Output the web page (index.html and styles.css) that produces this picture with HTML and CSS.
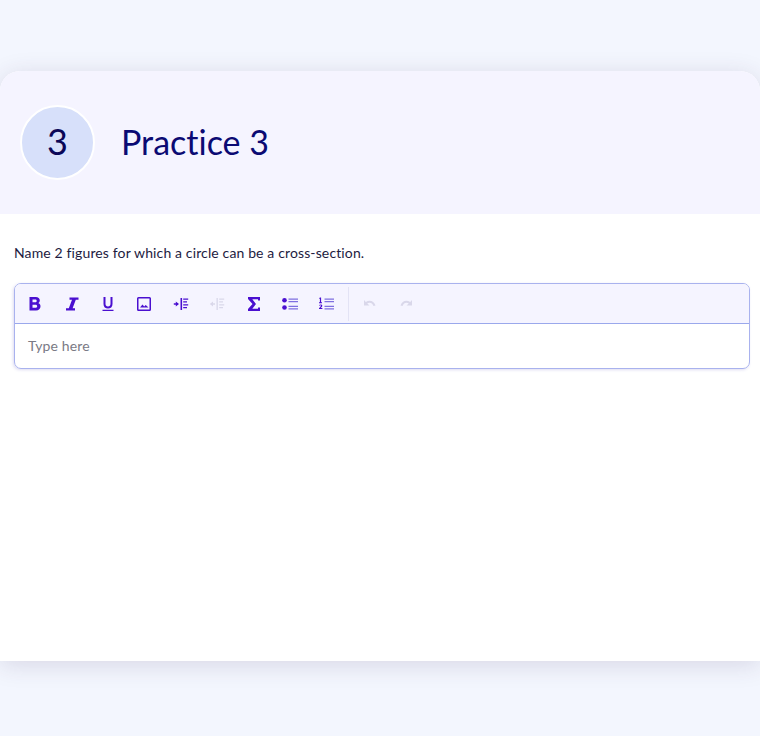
FILE: index.html
```html
<!DOCTYPE html>
<html lang="en">
<head>
    <meta charset="UTF-8">
    <meta name="viewport" content="width=device-width, initial-scale=1.0">
    <title>Practice 3</title>
    <link rel="stylesheet" href="styles.css">
</head>
<body>
    <div class="card">
        <div class="card-header">
            <div class="number">3</div>
            <h1 class="title">Practice 3</h1>
        </div>
        <div class="card-body">
            <p class="question">Name 2 figures for which a circle can be a cross-section.</p>
            <div class="editor">
                <div class="toolbar">
                    <div class="tool">
                        <svg viewBox="0 0 16 16"><path d="M2.500 1h6.300c2.500 0 4 1.300 4 3.400 0 1.200-.6 2.200-1.600 2.700 1.400.5 2.300 1.600 2.300 3.100 0 2.400-1.700 4.300-4.500 4.300H2.500V1zm3 2.500v2.800h2.700c.9 0 1.500-.5 1.500-1.400s-.6-1.400-1.500-1.400H5.500zm0 5.200v3h3c1.100 0 1.700-.6 1.700-1.500s-.6-1.500-1.700-1.500h-3z" fill-rule="evenodd"/></svg>
                    </div>
                    <div class="tool">
                        <svg viewBox="0 0 16 16"><path d="M5.500 1.500h9v2.200h-2.700L8.600 12.300h2.400v2.200H2v-2.200h2.800L8 3.700H5.500z"/></svg>
                    </div>
                    <div class="tool">
                        <svg viewBox="0 0 16 16"><path d="M3.500 1h2v6.800c0 1.700 1 2.700 2.500 2.700s2.500-1 2.500-2.700V1h2v7c0 3-1.900 4.500-4.500 4.500S3.500 11 3.500 8zM2.500 13.800h11V15h-11z"/></svg>
                    </div>
                    <div class="tool">
                        <svg viewBox="0 0 16 16"><path d="M2.500 1h11A1.500 1.500 0 0 1 15 2.500v11a1.500 1.500 0 0 1-1.500 1.500h-11A1.500 1.500 0 0 1 1 13.500v-11A1.500 1.500 0 0 1 2.500 1zm0 1.600v10.800h11V2.600zm1.500 9l2.500-3.200 1.700 2 1.500-1.500 2.800 2.700z" fill-rule="evenodd"/></svg>
                    </div>
                    <div class="tool">
                        <svg viewBox="0 0 16 16"><path d="M7.500 2h1.600v12H7.500zM10.200 2.500h5v1.300h-5zM10.200 5.300h3.800v1.300h-3.800zM10.200 8.200h5v1.300h-5zM10.200 11h3.800v1.300h-3.800zM0.800 7.300h2V5.600L6 8l-3.200 2.400V8.700h-2z"/></svg>
                    </div>
                    <div class="tool disabled">
                        <svg viewBox="0 0 16 16"><path d="M7.500 2h1.300v12H7.500zM10.200 2.500h5v1.300h-5zM10.200 5.300h3.800v1.300h-3.800zM10.200 8.200h5v1.300h-5zM10.200 11h3.800v1.300h-3.800zM6 7.300H4V5.600L.8 8 4 10.400V8.700h2z"/></svg>
                    </div>
                    <div class="tool">
                        <svg viewBox="0 0 16 16"><path d="M2 1h12v3.600h-2V3.300H6.300L10 8l-3.700 4.700H12v-1.300h2V15H2v-2l4.500-5L2 3z"/></svg>
                    </div>
                    <div class="tool">
                        <svg viewBox="0 0 16 16"><circle cx="2.500" cy="4.300" r="2.300"/><circle cx="2.500" cy="11.500" r="2.300"/><path class="light" d="M6.500 2.500H16v1.300H6.500zM6.500 5H16v1.300H6.500zM6.500 9.700H16V11H6.500zM6.500 12.200H16v1.300H6.500z"/></svg>
                    </div>
                    <div class="tool">
                        <svg viewBox="0 0 16 16"><path d="M1.800 1.500h1.300v4.700H4v1H1v-1h.9V2.700l-.9.300zM1 9.300c.4-.6 1-.9 1.700-.9 1 0 1.600.6 1.600 1.400 0 .7-.5 1.200-1.600 2.300h1.700v1H1v-.9c1.500-1.500 2-2 2-2.400 0-.3-.2-.5-.5-.5s-.6.2-.8.5z"/><path class="light" d="M6.500 2.500H16v1.300H6.500zM6.500 5H16v1.300H6.500zM6.500 9.700H16V11H6.500zM6.500 12.200H16v1.300H6.500z"/></svg>
                    </div>
                    <div class="divider"></div>
                    <div class="tool disabled">
                        <svg viewBox="0 0 16 16"><path d="M2 4v5.500h5.500L5.200 7.400c2.400-1.600 5.300-.6 6.300 2.600l2-.6C12.100 5 7.600 3.500 3.800 6z"/></svg>
                    </div>
                    <div class="tool disabled">
                        <svg viewBox="0 0 16 16"><path d="M14 4v5.500H8.500l2.300-2.100C8.400 5.800 5.500 6.800 4.500 10l-2-.6C3.900 5 8.400 3.500 12.200 6z"/></svg>
                    </div>
                </div>
                <div class="input">Type here</div>
            </div>
        </div>
    </div>
</body>
</html>
```

FILE: styles.css
```css
body {
    margin: 0;
    padding: 71px 0 75px;
    background-color: #f3f6fe;
    font-family: Lato, "Noto Sans", Arial, sans-serif;
    font-variant-ligatures: none;
}

.card {
    height: 590px;
    background-color: #fff;
    border-radius: 20px 20px 0 0;
    box-shadow: 0 4px 24px rgba(60, 40, 90, 0.15);
    overflow: hidden;
}

.card-header {
    height: 143px;
    box-sizing: border-box;
    padding: 0 0 1px 20px;
    background-color: #f5f4ff;
    display: flex;
    align-items: center;
    gap: 26px;
}

.number {
    width: 75px;
    height: 75px;
    box-sizing: border-box;
    padding-bottom: 2px;
    border: 2px solid #fff;
    border-radius: 50%;
    background-color: #d7e0fa;
    color: #0b0757;
    font-size: 36px;
    display: flex;
    align-items: center;
    justify-content: center;
}

.title {
    margin: 0 0 2px;
    color: #0b0a73;
    font-size: 34px;
    font-weight: 400;
}

.card-body {
    padding: 29px 10px 0 14px;
}

.question {
    margin: 0 0 20px;
    color: #1d1b3f;
    font-size: 14px;
    line-height: 20px;
    letter-spacing: 0.13px;
}

.editor {
    border: 1px solid #a9b2ee;
    border-radius: 7px;
    box-shadow: -1px 1px 3px rgba(90, 80, 190, 0.2);
    overflow: hidden;
}

.toolbar {
    height: 39px;
    padding: 0 0 0 2px;
    background-color: #f5f4ff;
    border-bottom: 1px solid #9aa8ec;
    display: flex;
    align-items: center;
}

.tool {
    width: 36.4px;
    height: 100%;
    display: flex;
    align-items: center;
    justify-content: center;
    flex-shrink: 0;
}

.tool svg {
    width: 16px;
    height: 16px;
    fill: #4a0fd0;
}

.tool svg .light {
    fill: #7f6fe0;
}

.tool.disabled svg {
    fill: #d9d7ea;
}

.divider {
    width: 1px;
    height: 34px;
    margin: 0 3px;
    background-color: #e3e3f5;
}

.input {
    height: 44px;
    box-sizing: border-box;
    padding: 0 13px;
    color: #7a7a85;
    font-size: 14px;
    line-height: 43px;
    letter-spacing: 0.13px;
}
```
